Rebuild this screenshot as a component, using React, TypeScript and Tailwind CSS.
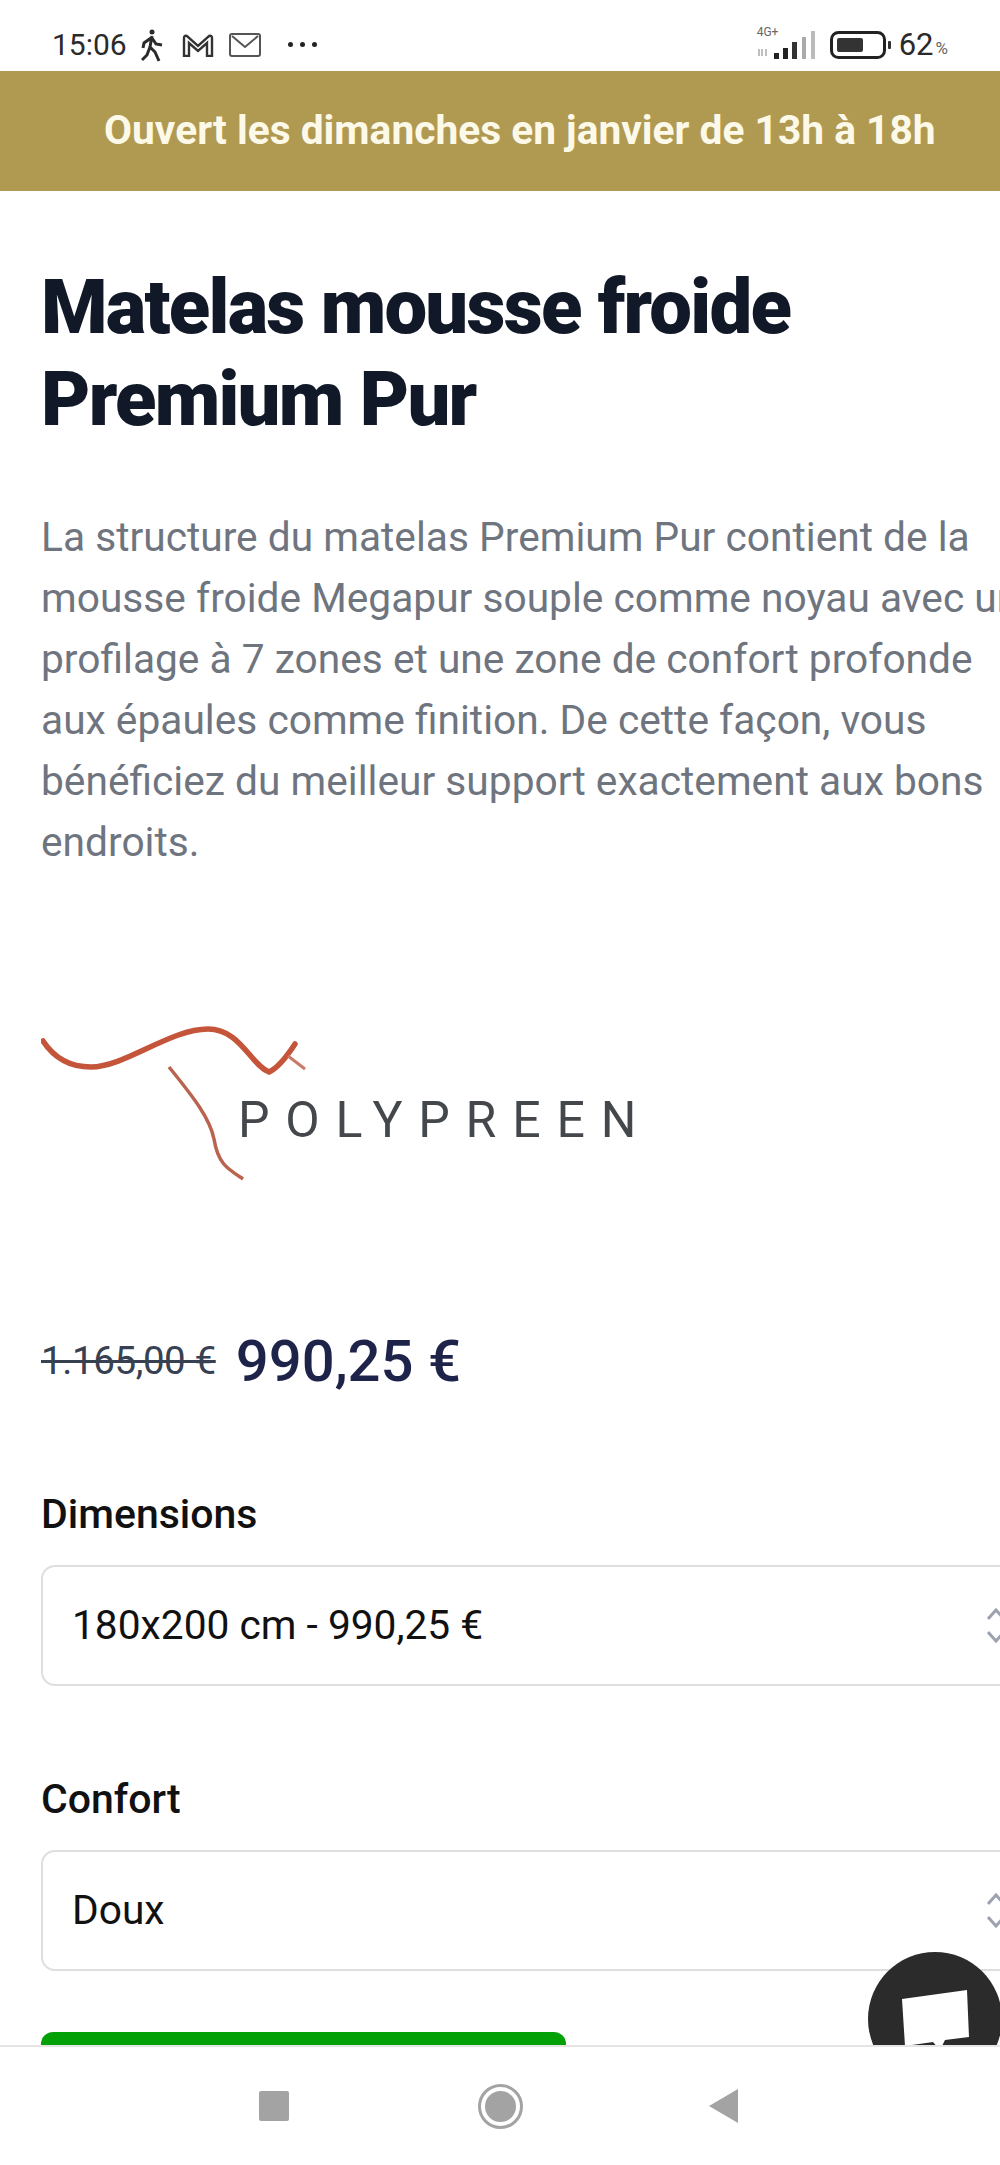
export default function App() {
  const font = { fontFamily: 'Roboto, "Liberation Sans", sans-serif' };
  return (
    <div style={font} className="relative flex h-[2165px] w-[1000px] flex-col overflow-hidden bg-white">
      {/* Status bar */}
      <div className="flex h-[71px] shrink-0 items-center justify-between pl-[52px] pr-[52px] pt-[18px] text-[#2a2a2a]">
        <div className="flex items-center">
          <span className="text-[30px] leading-none">15:06</span>
          <svg className="ml-[14px]" width="23" height="34" viewBox="0 0 23 34" fill="none" stroke="#2a2a2a" strokeWidth="3">
            <circle cx="11" cy="4" r="2.5" fill="#2a2a2a" stroke="none" />
            <path d="M11 8 L9 19 L14 24 L18 33 M9 19 L6 27 L1 32 M10 10 L3 15 L2 20 M11 10 L15 16 L21 17" />
          </svg>
          <svg className="ml-[18px]" width="32" height="24" viewBox="0 0 32 24" fill="none" stroke="#333" strokeWidth="2.4">
            <path d="M2 23 V5 Q2 2 5 3 L16 13 L27 3 Q30 2 30 5 V23 H25 V10 L16 18 L7 10 V23 Z" />
          </svg>
          <svg className="ml-[15px]" width="32" height="24" viewBox="0 0 32 24" fill="none" stroke="#555" strokeWidth="2">
            <rect x="1" y="1" width="30" height="22" rx="2" />
            <path d="M3 3 L16 14 L29 3" />
          </svg>
          <div className="ml-[27px] flex gap-[7px]">
            <span className="h-[5px] w-[5px] rounded-full bg-[#222]" />
            <span className="h-[5px] w-[5px] rounded-full bg-[#222]" />
            <span className="h-[5px] w-[5px] rounded-full bg-[#222]" />
          </div>
        </div>
        <div className="flex items-center">
          <div className="relative h-[32px] w-[60px]">
            <span className="absolute left-0 top-[-3px] text-[12px] leading-none text-[#666]">4G+</span>
            <svg className="absolute left-0 top-0" width="60" height="32" viewBox="0 0 60 32">
              <path d="M2 20 V27 M5 27 V20 M9 20 V27" stroke="#aaa" strokeWidth="1.5" />
              <rect x="17" y="24" width="5" height="6" fill="#222" />
              <rect x="26" y="19" width="5" height="11" fill="#222" />
              <rect x="35" y="13" width="5" height="17" fill="#333" />
              <rect x="45" y="8" width="4" height="22" fill="#aaa" />
              <rect x="54" y="2" width="4" height="28" fill="#bbb" />
            </svg>
          </div>
          <svg className="ml-[13px]" width="62" height="28" viewBox="0 0 62 28" fill="none">
            <rect x="1.5" y="1.5" width="53" height="25" rx="7" stroke="#222" strokeWidth="3" />
            <rect x="7" y="7" width="26" height="14" rx="2" fill="#333" />
            <rect x="58" y="10" width="3" height="8" rx="1" fill="#333" />
          </svg>
          <span className="ml-[7px] text-[31px] leading-none">62</span>
          <span className="ml-[2px] mt-[8px] text-[17px] leading-none text-[#666]">%</span>
        </div>
      </div>

      {/* Announcement banner */}
      <div className="flex h-[120px] shrink-0 items-center pl-[104px] text-[40.7px] font-bold text-[#fdf9e8] bg-[#b09a52] whitespace-nowrap">
        Ouvert les dimanches en janvier de 13h à 18h
      </div>

      {/* Page */}
      <main className="relative min-h-0 flex-1 overflow-hidden pl-[41px] pt-[70px]">
        <h1 className="text-[76px] font-black leading-[92px] tracking-[-1.75px] text-[#111827] whitespace-nowrap">
          Matelas mousse froide
          <br />
          Premium Pur
        </h1>
        <p className="mt-[62px] w-[1000px] text-[40.7px] leading-[61px] text-[#6f757f] whitespace-nowrap">
          La structure du matelas Premium Pur contient de la
          <br />
          mousse froide Megapur souple comme noyau avec un
          <br />
          profilage à 7 zones et une zone de confort profonde
          <br />
          aux épaules comme finition. De cette façon, vous
          <br />
          bénéficiez du meilleur support exactement aux bons
          <br />
          endroits.
        </p>

        {/* Logo */}
        <div className="relative mt-[148px] h-[165px] w-[640px] blur-[0.7px]">
          <svg className="absolute left-0 top-0" width="280" height="165" viewBox="41 1022 280 165" fill="none">
            <path d="M43 1042 Q60 1068 91 1068 C125 1068 170 1030 208 1030 C240 1030 250 1065 269 1073 Q280 1068 295 1045" stroke="#c4553a" strokeWidth="5.5" strokeLinecap="round" />
            <path d="M288 1057 L305 1070" stroke="#c97a66" strokeWidth="3" />
            <path d="M169 1068 C195 1100 210 1120 214 1140 C218 1165 228 1170 243 1180" stroke="#b8644f" strokeWidth="3.5" />
          </svg>
          <span className="absolute left-[197px] top-[69px] text-[50px] font-normal leading-[60px] tracking-[15.8px] text-[#44484d]">POLYPREEN</span>
        </div>

        {/* Price */}
        <div className="mt-[139px] flex items-center whitespace-nowrap">
          <span className="text-[38.5px] leading-none tracking-[-0.4px] text-[#374151] line-through">1.165,00 €</span>
          <span className="ml-[20px] text-[58px] font-medium leading-[72px] text-[#1e2349]">990,25 €</span>
        </div>

        {/* Selects */}
        <div className="mt-[95px] text-[41px] font-medium leading-[44px] text-[#111]">Dimensions</div>
        <Select value="180x200 cm - 990,25 €" />
        <div className="mt-[91px] text-[41px] font-medium leading-[44px] text-[#111]">Confort</div>
        <Select value="Doux" />

        {/* Green button */}
        <div className="mt-[61px] h-[40px] w-[525px] rounded-t-[12px] bg-[#03a008]" />

        {/* Chat bubble */}
        <div className="absolute left-[868px] top-[1761px] h-[134px] w-[134px] rounded-full bg-[#2b2b2b]">
          <svg className="absolute left-[32px] top-[38px]" width="70" height="60" viewBox="0 0 70 60">
            <path d="M2 9 L67 0 L69 47 L45 50 L40 60 L33 52 L5 56 Z" fill="#fff" />
          </svg>
        </div>
      </main>

      {/* Android nav bar */}
      <div className="relative flex h-[120px] shrink-0 items-center border-t-2 border-[#e5e5e5] bg-white pl-[259px]">
        <div className="h-[30px] w-[30px] rounded-[2px] bg-[#a3a3a3]" />
        <div className="ml-[189px] flex h-[45px] w-[45px] items-center justify-center rounded-full border-[3px] border-[#a3a3a3]">
          <div className="h-[31px] w-[31px] rounded-full bg-[#a3a3a3]" />
        </div>
        <svg className="ml-[185px]" width="30" height="36" viewBox="0 0 30 36">
          <path d="M30 1 V35 L1 18 Z" fill="#a3a3a3" />
        </svg>
      </div>
    </div>
  );
}

function Select({ value }: { value: string }) {
  return (
    <div className="mt-[29px] flex h-[121px] w-[1100px] items-center rounded-[14px] border-2 border-[#dedede] pl-[29px] text-[40.7px] text-[#111]">
      {value}
      <svg className="absolute left-[987px]" width="18" height="36" viewBox="0 0 18 36" fill="none" stroke="#9ca3af" strokeWidth="3">
        <path d="M1 11 L9 2 L17 11 M1 24 L9 33 L17 24" />
      </svg>
    </div>
  );
}
